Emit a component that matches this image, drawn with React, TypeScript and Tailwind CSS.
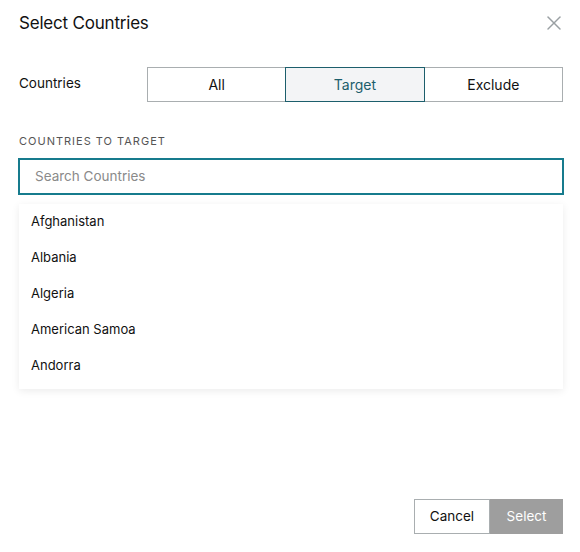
import { useState } from "react";
import { X } from "lucide-react";

const countries = ["Afghanistan", "Albania", "Algeria", "American Samoa", "Andorra"];
const modes = ["All", "Target", "Exclude"];

function App() {
  const [mode, setMode] = useState("Target");
  const [query, setQuery] = useState("");

  return (
    <div className="w-[580px] h-[552px] bg-white flex flex-col pl-[19px] pr-[17px] text-[#111] font-['Inter','Liberation_Sans',sans-serif]">
      {/* Header */}
      <div className="flex items-center justify-between h-[45px] pt-[1px]">
        <h1 className="text-[17px] leading-none tracking-[-0.2px]">Select Countries</h1>
        <button className="text-[#9aa0a3] -mr-[3px]">
          <X size={24} strokeWidth={1.5} />
        </button>
      </div>

      {/* Mode selector */}
      <div className="flex items-center mt-[22px]">
        <span className="w-[128px] text-[13.5px] -mt-[3px]">Countries</span>
        <div className="flex flex-1 h-[35px]">
          {modes.map((m, i) => (
            <button
              key={m}
              onClick={() => setMode(m)}
              className={`flex-1 flex items-center justify-center text-[14px] border ${
                mode === m
                  ? "border-[#1c5e6c] bg-[#f3f4f6] text-[#1c5e6c] z-10"
                  : "border-[#a9aeb0] bg-white text-[#111]"
              } ${i > 0 ? "-ml-px" : ""}`}
            >
              {m}
            </button>
          ))}
        </div>
      </div>

      {/* Search */}
      <div className="mt-[31px] text-[11px] tracking-[1px] text-[#555]">COUNTRIES TO TARGET</div>
      <input
        autoFocus
        value={query}
        onChange={(e) => setQuery(e.target.value)}
        placeholder="Search Countries"
        className="mt-[8px] -mx-[1px] h-[37px] border-2 border-[#167b8d] px-[15px] text-[13.5px] outline-none placeholder:text-[#8a8a8a] caret-black"
      />

      {/* Dropdown */}
      <div className="mt-[9px] bg-white shadow-[0_2px_8px_rgba(0,0,0,0.08)] pb-[5px]">
        {countries
          .filter((c) => c.toLowerCase().includes(query.toLowerCase()))
          .map((c) => (
            <div key={c} className="h-[36px] flex items-center px-[12px] text-[13px]">
              {c}
            </div>
          ))}
      </div>

      {/* Footer */}
      <div className="mt-auto mb-[18px] flex justify-end">
        <button className="w-[76px] h-[35px] border border-[#a9aeb0] text-[13.5px] bg-white">Cancel</button>
        <button className="w-[73px] h-[35px] bg-[#9e9e9e] text-white text-[13.5px]">Select</button>
      </div>
    </div>
  );
}

export default App;
